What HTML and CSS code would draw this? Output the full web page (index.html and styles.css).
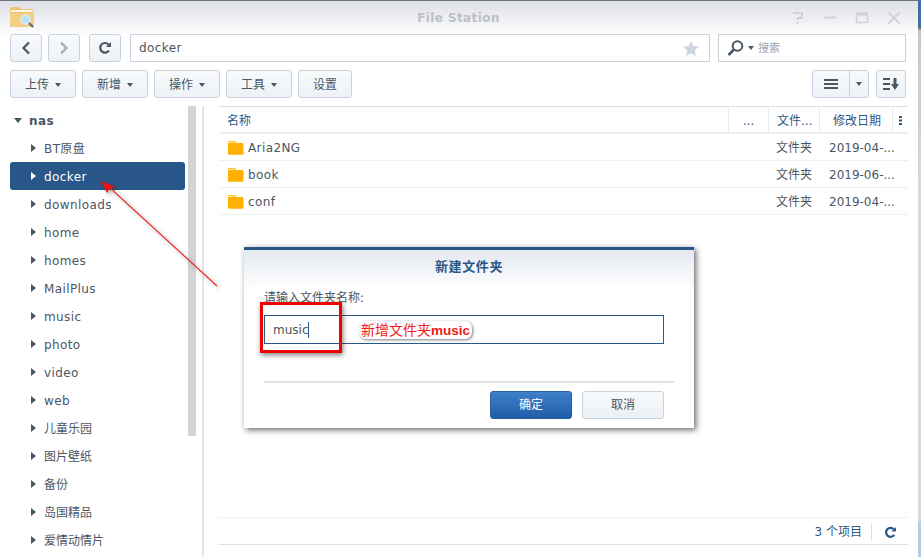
FILE: index.html
```html
<!DOCTYPE html>
<html lang="zh">
<head>
<meta charset="utf-8">
<title>File Station</title>
<link rel="stylesheet" href="styles.css">
</head>
<body>
<div class="window">
  <header class="titlebar">
    <svg class="app-icon" width="26" height="22" viewBox="0 0 26 22"><path d="M0 3q0-2 2-2h7l2 2h11q2 0 2 2v15q0 1-1 1H1q-1 0-1-1z" fill="#edc272"/><path d="M1 4h22v2H1z" fill="#fdf6e6"/><path d="M0 7h24v13q0 1-1 1H1q-1 0-1-1z" fill="#f3cf86"/><circle cx="15.500" cy="13.500" r="4.500" fill="#b5e2f6" stroke="#dfeaf0" stroke-width="1.500"/><path d="M19 17l4 4" stroke="#5b6670" stroke-width="2"/></svg>
    <span class="title">File Station</span>
    <div class="win-controls">
      <svg width="14" height="14" viewBox="0 0 14 14"><path d="M2 2h9v5H6.500v2M6.500 11v2" fill="none" stroke="#cfd3d7" stroke-width="2"/></svg>
      <svg width="14" height="14" viewBox="0 0 14 14"><path d="M1 6.500h12" stroke="#cfd3d7" stroke-width="2"/></svg>
      <svg width="14" height="14" viewBox="0 0 14 14"><path d="M1.500 2.500h11v9h-11z" fill="none" stroke="#cfd3d7" stroke-width="1.500"/><path d="M1 3h12" stroke="#cfd3d7" stroke-width="3"/></svg>
      <svg width="14" height="14" viewBox="0 0 14 14"><path d="M1.500 1.500l11 11M12.500 1.500l-11 11" stroke="#cfd3d7" stroke-width="2"/></svg>
    </div>
  </header>

  <div class="nav-row">
    <button class="btn square"><svg width="12" height="14" viewBox="0 0 12 14"><path d="M9 1.500L3.500 7 9 12.500" fill="none" stroke="#4b5663" stroke-width="2.200"/></svg></button>
    <button class="btn square"><svg width="12" height="14" viewBox="0 0 12 14"><path d="M3 1.500L8.500 7 3 12.500" fill="none" stroke="#a4abb4" stroke-width="2.200"/></svg></button>
    <button class="btn square refresh"><svg width="14" height="14" viewBox="0 0 14 14"><path d="M11 9.500A4.800 4.800 0 1 1 10.500 3.500" fill="none" stroke="#4b5663" stroke-width="2.200"/><path d="M8 6h5V1z" fill="#4b5663"/></svg></button>
    <div class="path-box">
      <span class="lat">docker</span>
      <svg width="16" height="15" viewBox="0 0 16 15"><path d="M8 0l2.300 5 5.700.6-4.200 3.800 1.200 5.600L8 12.200 3 15l1.200-5.600L0 5.600 5.700 5z" fill="#cdd6e0"/></svg>
    </div>
    <div class="search-box">
      <svg width="17" height="16" viewBox="0 0 17 16"><circle cx="10.500" cy="6" r="4.800" fill="none" stroke="#4b5663" stroke-width="2"/><path d="M7 9.500L1.500 15" stroke="#4b5663" stroke-width="2.600"/></svg>
      <i class="caret"></i>
      <span class="search-text">搜索</span>
    </div>
  </div>

  <div class="tool-row">
    <button class="btn tool">上传<i class="caret"></i></button>
    <button class="btn tool">新增<i class="caret"></i></button>
    <button class="btn tool">操作<i class="caret"></i></button>
    <button class="btn tool">工具<i class="caret"></i></button>
    <button class="btn tool plain">设置</button>
    <div class="view-group">
      <div class="btn split">
        <span class="split-main"><svg width="14" height="10" viewBox="0 0 14 10"><path d="M0 1h14M0 5h14M0 9h14" stroke="#4b5663" stroke-width="2"/></svg></span>
        <span class="split-side"><i class="caret"></i></span>
      </div>
      <button class="btn sort"><svg width="16" height="12" viewBox="0 0 16 12"><path d="M0 1h7M0 6h7M0 11h7" stroke="#4b5663" stroke-width="2"/><path d="M10.500 0h3v6H16l-4 6-4-6h2.500z" fill="#4b5663"/></svg></button>
    </div>
  </div>

  <div class="main">
    <aside class="sidebar">
      <ul class="tree">
        <li class="root"><i class="tri down"></i>nas</li>
        <li class="lat"><i class="tri"></i>BT原盘</li>
        <li class="lat selected"><i class="tri"></i>docker</li>
        <li class="lat"><i class="tri"></i>downloads</li>
        <li class="lat"><i class="tri"></i>home</li>
        <li class="lat"><i class="tri"></i>homes</li>
        <li class="lat"><i class="tri"></i>MailPlus</li>
        <li class="lat"><i class="tri"></i>music</li>
        <li class="lat"><i class="tri"></i>photo</li>
        <li class="lat"><i class="tri"></i>video</li>
        <li class="lat"><i class="tri"></i>web</li>
        <li><i class="tri"></i>儿童乐园</li>
        <li><i class="tri"></i>图片壁纸</li>
        <li><i class="tri"></i>备份</li>
        <li><i class="tri"></i>岛国精品</li>
        <li><i class="tri"></i>爱情动情片</li>
      </ul>
      <div class="scrollbar"></div>
    </aside>

    <section class="content">
      <div class="head file-grid">
        <span class="c-name">名称</span>
        <span class="c-size">...</span>
        <span class="c-type">文件...</span>
        <span class="c-date">修改日期</span>
        <span class="c-more"><svg width="3" height="9" viewBox="0 0 3 9"><path d="M0 0h3v2H0zM0 3.500h3v2H0zM0 7h3v2H0z" fill="#2a5789"/></svg></span>
      </div>
      <div class="rows">
        <div class="row file-grid">
          <span class="c-name lat"><svg class="folder" width="17" height="15" viewBox="0 0 17 15"><use href="#folder"/></svg>Aria2NG</span><span></span><span class="c-type">文件夹</span><span class="c-date">2019-04-...</span><span></span>
        </div>
        <div class="row file-grid">
          <span class="c-name lat"><svg class="folder" width="17" height="15" viewBox="0 0 17 15"><use href="#folder"/></svg>book</span><span></span><span class="c-type">文件夹</span><span class="c-date">2019-06-...</span><span></span>
        </div>
        <div class="row file-grid">
          <span class="c-name lat"><svg class="folder" width="17" height="15" viewBox="0 0 17 15"><use href="#folder"/></svg>conf</span><span></span><span class="c-type">文件夹</span><span class="c-date">2019-04-...</span><span></span>
        </div>
      </div>
      <footer class="status">
        <span class="count">3 个项目</span>
        <span class="status-refresh"><svg width="13" height="13" viewBox="0 0 14 14"><path d="M11 9.500A4.800 4.800 0 1 1 10.500 3.500" fill="none" stroke="#2a5789" stroke-width="2.400"/><path d="M8 6h5V1z" fill="#2a5789"/></svg></span>
      </footer>
    </section>
  </div>
</div>

<div class="dialog">
  <div class="dialog-title">新建文件夹</div>
  <div class="dialog-body">
    <div class="dialog-label">请输入文件夹名称:</div>
    <div class="dialog-input">music<i class="cursor"></i></div>
    <div class="dialog-rule"></div>
    <div class="dialog-actions">
      <button class="dbtn primary">确定</button>
      <button class="dbtn">取消</button>
    </div>
  </div>
</div>

<div class="mark-box"></div>
<div class="mark-note">新增文件夹<b>music</b></div>
<svg class="mark-arrow" width="921" height="557" viewBox="0 0 921 557">
  <path d="M217 286L109 187" stroke="#ef2b2b" stroke-width="1.200" fill="none"/>
  <path d="M101 181l15 6-6 1-3 5z" fill="#f01010"/>
</svg>

<svg width="0" height="0" class="defs"><defs><symbol id="folder" viewBox="0 0 17 15"><path d="M1 1h7l2 2h6v2H1z" fill="#ffb300"/><path d="M1 1.800h7.500v.8H1z" fill="#fff"/><path d="M1 4.500h15.500V14q0 .8-.8.800H1.800Q1 14.800 1 14z" fill="#ffb000"/></symbol></defs></svg>
</body>
</html>
```
FILE: styles.css
```css
* { box-sizing: border-box; }
html, body { margin: 0; height: 100%; }
body {
  position: relative;
  width: 921px;
  height: 557px;
  overflow: hidden;
  display: flex;
  background: linear-gradient(#3f6d9f 0, #3f6d9f 26px, #70757a 27px, #70757a 29px, #c4c6c9 30px, #d8d9db 200px, #d8d9db 521px, #b7cbe0 522px);
  font-family: "DejaVu Sans", "Noto Sans CJK SC", sans-serif;
  font-size: 12px;
  line-height: 14px;
  color: #4b5663;
}
.lat { letter-spacing: 0.4px; }
.window {
  width: 918px;
  height: 557px;
  flex: none;
  display: flex;
  flex-direction: column;
  background: #fff;
  border-top: 1px solid #6b737c;
}
.titlebar {
  height: 33px;
  flex: none;
  display: flex;
  align-items: center;
  padding: 0 0 0 10px;
  position: relative;
  background: linear-gradient(#dde0e5, #fcfcfd);
}
.app-icon { margin-top: -2px; }
.title {
  position: absolute;
  left: 0;
  right: 1px;
  text-align: center;
  font-weight: bold;
  font-size: 12px;
  color: #bcc0c5;
  letter-spacing: 0.4px;
}
.win-controls {
  margin-left: auto;
  margin-right: 17px;
  display: flex;
  gap: 18px;
}
.nav-row, .tool-row {
  display: flex;
  flex: none;
  height: 28px;
  padding: 0 12px 0 10px;
  align-items: stretch;
}
.nav-row { margin-bottom: 8px; }
.btn {
  height: 28px;
  border: 1px solid #c8d2de;
  border-radius: 3px;
  background: linear-gradient(#f8fafc, #edf2f7);
  font: inherit;
  color: #4b5663;
  padding: 0;
  display: flex;
  align-items: center;
  justify-content: center;
}
.square { width: 32px; margin-right: 6px; }
.refresh { margin: 0 9px 0 3px; }
.path-box {
  width: 580px;
  border: 1px solid #c8d2de;
  display: flex;
  align-items: center;
  justify-content: space-between;
  padding: 0 10px 0 8px;
  color: #4b5663;
  background: #fff;
}
.search-box {
  width: 188px;
  margin-left: 8px;
  border: 1px solid #c8d2de;
  display: flex;
  align-items: center;
  padding-left: 8px;
  color: #9aa3ad;
  font-size: 11px;
}
.search-box .caret { margin: 0 4px; }
.search-text { padding-top: 2px; }
.caret {
  display: inline-block;
  width: 0;
  height: 0;
  border: 3.500px solid transparent;
  border-top: 4px solid #4b5663;
  border-bottom: 0;
}
.tool { width: 66px; margin-right: 6px; gap: 6px; padding-top: 2px; }
.plain { width: 54px; margin-right: 0; }
.view-group { margin-left: auto; display: flex; gap: 7px; }
.split { width: 57px; align-items: stretch; }
.split-main {
  width: 37px;
  display: flex;
  align-items: center;
  justify-content: center;
  border-right: 1px solid #c8d2de;
}
.split-side { flex: 1; display: flex; align-items: center; justify-content: center; }
.sort { width: 30px; }

.main {
  flex: 1;
  min-height: 0;
  display: flex;
  margin-top: 8px;
}
.sidebar {
  width: 204px;
  flex: none;
  position: relative;
  overflow: hidden;
  border-right: 2px solid #e4e6e8;
}
.tree {
  list-style: none;
  margin: 0;
  padding: 0 0 0 10px;
  width: 185px;
}
.tree li {
  height: 28px;
  display: flex;
  align-items: center;
  padding-top: 2px;
  padding-left: 21px;
  gap: 8px;
  border-radius: 3px;
}
.tree .root {
  padding-left: 4px;
  gap: 7px;
  font-weight: bold;
  letter-spacing: 0.4px;
}
.tree .selected { background: #2a5789; color: #fff; }
.tri {
  width: 0;
  height: 0;
  flex: none;
  margin-top: -2px;
  border: 4px solid transparent;
  border-left: 5px solid #4b5663;
  border-right: 0;
}
.tri.down {
  border: 4px solid transparent;
  border-top: 5px solid #4b5663;
  border-bottom: 0;
}
.selected .tri { border-left-color: #fff; }
.scrollbar {
  position: absolute;
  left: 188px;
  top: 0;
  width: 8px;
  height: 330px;
  background: #d2d4d6;
}
.content {
  flex: 1;
  min-width: 0;
  display: flex;
  flex-direction: column;
  padding: 0 10px 12px 15px;
}
.file-grid {
  display: grid;
  grid-template-columns: 509px 40px 51px 73px 16px;
  align-items: center;
}
.head {
  height: 28px;
  flex: none;
  border-top: 1px solid #d6e0ea;
  border-bottom: 2px solid #edf0f3;
  color: #2a5789;
}
.head span { height: 100%; display: flex; align-items: center; padding-top: 2px; }
.c-name { padding-left: 8px; }
.head .c-size, .head .c-type, .head .c-date, .head .c-more { border-left: 1px solid #e3eaf1; }
.head .c-size { justify-content: center; }
.head .c-type { padding-left: 8px; }
.head .c-date { padding-left: 13px; }
.head .c-more { justify-content: center; }
.rows { flex: 1; }
.row { height: 27px; border-bottom: 1px solid #edf0f3; padding-top: 2px; }
.row .c-name { display: flex; align-items: center; padding-left: 8px; gap: 4px; }
.row .c-type { padding-left: 8px; }
.row .c-date { padding-left: 10px; white-space: nowrap; }
.folder { flex: none; margin-top: -2px; }
.status {
  height: 28px;
  flex: none;
  padding-top: 2px;
  border-top: 1px solid #edf0f3;
  border-bottom: 1px solid #d6e0ea;
  display: flex;
  align-items: center;
  justify-content: flex-end;
  color: #2a5789;
}
.status-refresh {
  margin-left: 9px;
  width: 37px;
  height: 16px;
  display: flex;
  align-items: center;
  justify-content: center;
  border-left: 1px solid #d6e0ea;
}

.dialog {
  position: absolute;
  left: 244px;
  top: 247px;
  width: 450px;
  height: 181px;
  background: #fff;
  border-top: 3px solid #2a5789;
  box-shadow: 2px 2px 6px rgba(0, 0, 0, 0.6);
}
.dialog-title {
  height: 40px;
  padding-top: 10px;
  text-align: center;
  font-size: 13px;
  letter-spacing: 0.6px;
  font-weight: bold;
  color: #2a5789;
  background: linear-gradient(#e4e9f0, #fff);
}
.dialog-body { padding: 0 20px; }
.dialog-label { height: 25px; padding-top: 1px; }
.dialog-input {
  width: 400px;
  height: 29px;
  border: 1px solid #2a5789;
  padding-left: 8px;
  display: flex;
  align-items: center;
}
.cursor { width: 1px; height: 16px; background: #2a5789; }
.dialog-rule { width: 410px; height: 2px; margin-top: 37px; background: #e3e3e3; }
.dialog-actions {
  width: 400px;
  margin-top: 8px;
  display: flex;
  justify-content: flex-end;
  gap: 10px;
}
.dbtn {
  width: 82px;
  height: 28px;
  border: 1px solid #c8d2de;
  border-radius: 3px;
  background: linear-gradient(#f7f9fb, #ebf0f5);
  font: inherit;
  color: #4b5663;
}
.primary {
  background: linear-gradient(#3f80cb, #215da8);
  border-color: #2a5f9e;
  color: #fff;
}
.mark-box {
  position: absolute;
  left: 260px;
  top: 302px;
  width: 82px;
  height: 51px;
  border: 3px solid #f00000;
  box-shadow: 1px 2px 5px rgba(0, 0, 0, 0.5);
}
.mark-note {
  position: absolute;
  left: 359px;
  top: 321px;
  height: 18px;
  padding: 0 2px;
  line-height: 18px;
  font-size: 14px;
  color: #f01818;
  background: #fff;
  border-radius: 7px;
  box-shadow: 1px 1px 3px rgba(0, 0, 0, 0.5);
}
.mark-note b { font-family: "Liberation Sans", sans-serif; font-size: 13.500px; }
.mark-arrow {
  position: absolute;
  left: 0;
  top: 0;
  pointer-events: none;
  filter: drop-shadow(2px 2px 2px rgba(0, 0, 0, 0.35));
}
.defs { position: absolute; }
```
